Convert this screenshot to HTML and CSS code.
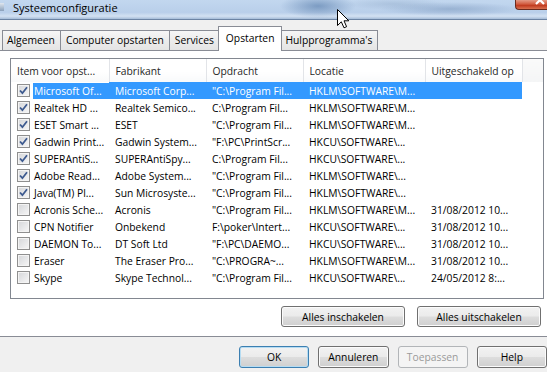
FILE: index.html
```html
<!DOCTYPE html>
<html lang="nl">
<head>
    <meta charset="UTF-8">
    <title>Systeemconfiguratie</title>
    <link rel="stylesheet" href="styles.css">
</head>
<body>
    <div class="window">
        <!-- titelbalk -->
        <div class="titlebar">
            <span class="app-icon"></span>
            <span class="title">Systeemconfiguratie</span>
            <span class="close">
                <svg width="32" height="10" viewBox="0 0 32 10">
                    <path d="M20 -4 L28 4 M28 -4 L20 4" stroke="#fff" stroke-width="2.2" fill="none"/>
                </svg>
            </span>
        </div>

        <div class="tabs">
            <div class="tab">Algemeen</div>
            <div class="tab">Computer opstarten</div>
            <div class="tab">Services</div>
            <div class="tab active">Opstarten</div>
            <div class="tab">Hulpprogramma's</div>
        </div>

        <div class="panel">
            <div class="listview">
                <table class="startup">
                    <colgroup>
                        <col class="c-item">
                        <col class="c-maker">
                        <col class="c-cmd">
                        <col class="c-loc">
                        <col class="c-date">
                        <col class="c-rest">
                    </colgroup>
                    <thead>
                        <tr>
                            <th>Item voor opst...</th>
                            <th>Fabrikant</th>
                            <th>Opdracht</th>
                            <th>Locatie</th>
                            <th>Uitgeschakeld op</th>
                            <th class="rest"></th>
                        </tr>
                    </thead>
                    <tbody id="rows"></tbody>
                </table>
            </div>
            <div class="panel-actions">
                <button class="btn wide">Alles inschakelen</button>
                <button class="btn wide">Alles uitschakelen</button>
            </div>
        </div>

        <div class="dialog-actions">
            <button class="btn default">OK</button>
            <button class="btn">Annuleren</button>
            <button class="btn" disabled>Toepassen</button>
            <button class="btn">Help</button>
        </div>

        <!-- muisaanwijzer boven de titelbalk -->
        <svg class="cursor" width="13" height="20" viewBox="0 0 13 20">
            <path d="M0.5 0.5 L0.5 16.5 L4.3 12.8 L7 18.8 L9.6 17.7 L7 11.8 L11.8 11.8 Z" fill="#fff" stroke="#000" stroke-width="1" stroke-linejoin="round"/>
        </svg>
    </div>

    <script>
        // opstartitems: [aan, naam, fabrikant, opdracht, locatie, uitgeschakeld op]
        const items = [
            [true, "Microsoft Of...", "Microsoft Corp...", "\"C:\\Program Fil...", "HKLM\\SOFTWARE\\M...", ""],
            [true, "Realtek HD ...", "Realtek Semico...", "C:\\Program Fil...", "HKLM\\SOFTWARE\\M...", ""],
            [true, "ESET Smart ...", "ESET", "\"C:\\Program Fil...", "HKLM\\SOFTWARE\\M...", ""],
            [true, "Gadwin Print...", "Gadwin System...", "\"F:\\PC\\PrintScr...", "HKCU\\SOFTWARE\\...", ""],
            [true, "SUPERAntiS...", "SUPERAntiSpy...", "C:\\Program Fil...", "HKCU\\SOFTWARE\\...", ""],
            [true, "Adobe Read...", "Adobe System...", "\"C:\\Program Fil...", "HKLM\\SOFTWARE\\...", ""],
            [true, "Java(TM) Pl...", "Sun Microsyste...", "\"C:\\Program Fil...", "HKLM\\SOFTWARE\\...", ""],
            [false, "Acronis Sche...", "Acronis", "\"C:\\Program Fil...", "HKLM\\SOFTWARE\\M...", "31/08/2012 10..."],
            [false, "CPN Notifier", "Onbekend", "F:\\poker\\Intert...", "HKCU\\SOFTWARE\\...", "31/08/2012 10..."],
            [false, "DAEMON To...", "DT Soft Ltd", "\"F:\\PC\\DAEMO...", "HKCU\\SOFTWARE\\...", "31/08/2012 10..."],
            [false, "Eraser", "The Eraser Pro...", "\"C:\\PROGRA~...", "HKLM\\SOFTWARE\\M...", "31/08/2012 10..."],
            [false, "Skype", "Skype Technol...", "\"C:\\Program Fil...", "HKCU\\SOFTWARE\\...", "24/05/2012 8:..."]
        ];

        const check = '<svg width="11" height="11" viewBox="0 0 11 11"><path d="M2 5.5 L4.4 8.2 L9 2.2" stroke="#3d5a8f" stroke-width="1.8" fill="none"/></svg>';

        const tbody = document.getElementById("rows");
        items.forEach((item, i) => {
            const tr = document.createElement("tr");
            if (i === 0) tr.className = "selected";

            const first = document.createElement("td");
            first.innerHTML = '<div class="item"><span class="cb">' + (item[0] ? check : '') +
                '</span><span class="name"></span></div>';
            first.querySelector(".name").textContent = item[1];
            tr.appendChild(first);

            for (let c = 2; c < 6; c++) {
                const td = document.createElement("td");
                td.textContent = item[c];
                tr.appendChild(td);
            }
            const rest = document.createElement("td");
            rest.className = "rest";
            tr.appendChild(rest);

            tbody.appendChild(tr);
        });
    </script>
</body>
</html>
```

FILE: styles.css
```css
* {
    box-sizing: border-box;
}
body {
    margin: 0;
    background-color: #f0f0f0;
    font-family: "Open Sans", "Noto Sans", sans-serif;
    font-size: 10.3px;
    color: #000;
}
.window {
    position: relative;
    width: 547px;
    height: 372px;
    overflow: hidden;
}

/* titelbalk */
.titlebar {
    display: flex;
    align-items: flex-start;
    height: 20px;
    border-bottom: 1px solid #6c84a4;
    background:
        radial-gradient(ellipse 38px 12px at 318px 6px, rgba(70, 110, 160, 0.55), transparent),
        radial-gradient(ellipse 70px 7px at 450px 9px, rgba(110, 140, 180, 0.45), transparent),
        radial-gradient(ellipse 50px 6px at 395px 4px, rgba(150, 175, 205, 0.5), transparent),
        linear-gradient(#c2d7ef, #b9cfea 65%, #d3e1f2 85%, #a5bcd8);
}
.app-icon {
    width: 4px;
    height: 8px;
    margin-top: 3px;
    background: linear-gradient(#dfe6ee, #8aa0bb);
}
.title {
    margin-left: 9px;
    font-size: 11px;
    line-height: 15px;
}
.close {
    margin-left: auto;
    width: 32px;
    height: 10px;
    border: 1px solid #6a2b1e;
    border-top: none;
    border-right: none;
    border-radius: 0 0 0 4px;
    background: linear-gradient(#e39a86, #d25d41 45%, #c13c20 60%, #d9704f);
    overflow: hidden;
}
.close svg {
    display: block;
}

/* tabbladen */
.tabs {
    display: flex;
    align-items: flex-end;
    height: 24px;
    margin-top: 6px;
    padding-left: 2px;
}
.tab {
    height: 20px;
    line-height: 19px;
    padding: 0 5px;
    border: 1px solid #898c95;
    border-bottom: none;
    border-left: none;
    background: linear-gradient(#f6f6f6, #ececec 50%, #e4e4e4);
    white-space: nowrap;
}
.tab:first-child {
    border-left: 1px solid #898c95;
    padding-left: 4px;
}
.tab.active {
    position: relative;
    z-index: 1;
    height: 25px;
    line-height: 22px;
    margin: 0 -2px -1px -2px;
    padding: 0 7px;
    border-left: 1px solid #898c95;
    background: #fff;
}

/* paneel */
.panel {
    height: 287px;
    padding: 7px 0 0 10px;
    background-color: #fff;
    border-top: 1px solid #898c95;
    border-bottom: 1px solid #898c95;
}
.listview {
    width: 534px;
    height: 241px;
    border: 1px solid #828790;
    background-color: #fff;
    overflow: hidden;
}
.startup {
    width: 532px;
    border-collapse: collapse;
    table-layout: fixed;
}
.c-item { width: 98px; }
.c-maker { width: 97px; }
.c-cmd { width: 97px; }
.c-loc { width: 122px; }
.c-date { width: 97px; }
.c-rest { width: 21px; }

.startup th {
    height: 23px;
    padding: 0 6px;
    font-weight: normal;
    text-align: left;
    color: #262626;
    border-right: 1px solid #e2e4e8;
    background: linear-gradient(#fff, #fff 55%, #f8f9fa);
    white-space: nowrap;
    overflow: hidden;
}
.startup th.rest {
    border-right: none;
    background: linear-gradient(#fafafa, #f4f5f6);
}
.startup td {
    height: 17px;
    padding: 0 6px;
    white-space: nowrap;
    overflow: hidden;
}
.startup td:first-child {
    padding-right: 0;
}
.item {
    display: flex;
    align-items: center;
    height: 17px;
}
.cb {
    flex: none;
    width: 13px;
    height: 13px;
    border: 1px solid #8f8f8f;
    background: linear-gradient(135deg, #d4d6d9, #f7f7f7);
    box-shadow: inset 0 0 0 1px #f4f4f4;
    display: flex;
    align-items: center;
    justify-content: center;
}
.name {
    flex: 1;
    height: 16px;
    line-height: 16px;
    margin-left: 3px;
    padding-left: 1px;
}
tr.selected td:not(:first-child):not(.rest),
tr.selected .name {
    background-color: #3399ff;
    color: #fff;
}

/* knoppen */
.panel-actions {
    display: flex;
    justify-content: flex-end;
    gap: 12px;
    margin-top: 7px;
    padding-right: 6px;
}
.btn {
    height: 22px;
    width: 72px;
    padding: 0;
    font-family: inherit;
    font-size: inherit;
    color: #000;
    border: 1px solid #707070;
    border-radius: 3px;
    background: linear-gradient(#f2f2f2, #ebebeb 48%, #dddddd 52%, #cfcfcf);
    box-shadow: inset 0 0 0 1px #fbfbfb;
}
.btn.wide {
    width: 124px;
    height: 21px;
}
.btn.default {
    border-color: #3c7fb1;
    box-shadow: inset 0 0 0 1px #b6dcf2;
}
.btn:disabled {
    color: #9a9a9a;
    border-color: #b2b5b8;
    background: #f4f4f4;
    box-shadow: none;
}
.dialog-actions {
    display: flex;
    gap: 9px;
    padding: 9px 0 0 239px;
}

.cursor {
    position: absolute;
    left: 337px;
    top: 9px;
}
```
